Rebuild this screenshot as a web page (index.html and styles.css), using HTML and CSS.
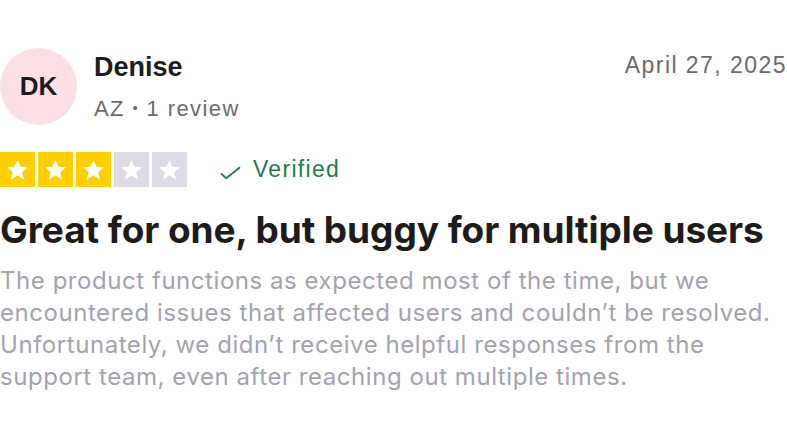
FILE: index.html
```html
<!DOCTYPE html>
<html>
<head>
<meta charset="utf-8">
<link rel="stylesheet" href="styles.css">
</head>
<body>
<article class="review">
  <header class="head">
    <div class="avatar">DK</div>
    <div class="who">
      <div class="name">Denise</div>
      <div class="meta">AZ <span class="dot">•</span> 1 review</div>
    </div>
    <div class="date">April 27, 2025</div>
  </header>
  <div class="rating">
    <div class="stars">
      <span class="star on"><svg viewBox="0 0 24 24"><path d="M12 3.5l2.6 6.1 6.6.5-5 4.3 1.6 6.4L12 17.4l-5.8 3.4 1.6-6.4-5-4.3 6.6-.5z"/></svg></span>
      <span class="star on"><svg viewBox="0 0 24 24"><path d="M12 3.5l2.6 6.1 6.6.5-5 4.3 1.6 6.4L12 17.4l-5.8 3.4 1.6-6.4-5-4.3 6.6-.5z"/></svg></span>
      <span class="star on"><svg viewBox="0 0 24 24"><path d="M12 3.5l2.6 6.1 6.6.5-5 4.3 1.6 6.4L12 17.4l-5.8 3.4 1.6-6.4-5-4.3 6.6-.5z"/></svg></span>
      <span class="star"><svg viewBox="0 0 24 24"><path d="M12 3.5l2.6 6.1 6.6.5-5 4.3 1.6 6.4L12 17.4l-5.8 3.4 1.6-6.4-5-4.3 6.6-.5z"/></svg></span>
      <span class="star"><svg viewBox="0 0 24 24"><path d="M12 3.5l2.6 6.1 6.6.5-5 4.3 1.6 6.4L12 17.4l-5.8 3.4 1.6-6.4-5-4.3 6.6-.5z"/></svg></span>
    </div>
    <div class="verified">
      <svg class="check" viewBox="0 0 22 14"><path d="M1 7.5l5.5 5L21 1"/></svg>
      <span>Verified</span>
    </div>
  </div>
  <h1 class="title">Great for one, but buggy for multiple users</h1>
  <p class="body">The product functions as expected most of the time, but we encountered issues that affected users and couldn’t be resolved. Unfortunately, we didn’t receive helpful responses from the support team, even after reaching out multiple times.</p>
</article>
</body>
</html>
```
FILE: styles.css
```css
html, body { margin: 0; padding: 0; background: #fff; }
body { font-family: Inter, "Liberation Sans", Arial, sans-serif; }
.review { width: 787px; padding-top: 48px; }
.head { display: flex; align-items: flex-start; }
.avatar {
  width: 77px; height: 77px; border-radius: 50%;
  background: #fde0e6; color: #1c1c1c;
  display: flex; align-items: center; justify-content: center;
  font-family: "Liberation Sans", Arial, sans-serif;
  font-weight: bold; font-size: 26px; flex: none;
}
.who { margin-left: 17px; padding-top: 2px; }
.name { font-family: "Liberation Sans", Arial, sans-serif; font-weight: bold; font-size: 27px; color: #1c1c1c; line-height: 34px; }
.meta { font-family: "Liberation Sans", Arial, sans-serif; font-size: 22px; letter-spacing: 1.4px; color: #6b6b6b; line-height: 30px; margin-top: 9px; }
.dot { font-size: 15px; vertical-align: 3px; }
.date { margin-left: auto; margin-right: 0; font-family: "Liberation Sans", Arial, sans-serif; font-size: 23px; letter-spacing: 1.45px; color: #6b6b6b; line-height: 34px; }
.rating { display: flex; align-items: center; margin-top: 27px; }
.stars { display: flex; gap: 3px; }
.star { width: 35px; height: 35px; background: #dcdce6; display: flex; align-items: center; justify-content: center; }
.star.on { background: #ffcf00; }
.star svg { width: 27px; height: 27px; fill: #fff; }
.verified { display: flex; align-items: center; margin-left: 33px; color: #1a7f48; font-family: "Liberation Sans", Arial, sans-serif; font-size: 23px; letter-spacing: 1.3px; }
.check { width: 21px; height: 14px; fill: none; stroke: #1a7f48; stroke-width: 1.8; margin-right: 12px; margin-top: 6px; }
.title { margin: 21px 0 13px; font-family: Inter, "Liberation Sans", sans-serif; font-weight: 700; font-size: 37px; line-height: 44px; color: #1c1c1c; letter-spacing: -0.06px; white-space: nowrap; }
.body { margin: 0; font-family: Inter, "Liberation Sans", sans-serif; font-size: 24px; line-height: 32px; color: #a3a3ae; letter-spacing: 0.55px; width: 787px; }
```
